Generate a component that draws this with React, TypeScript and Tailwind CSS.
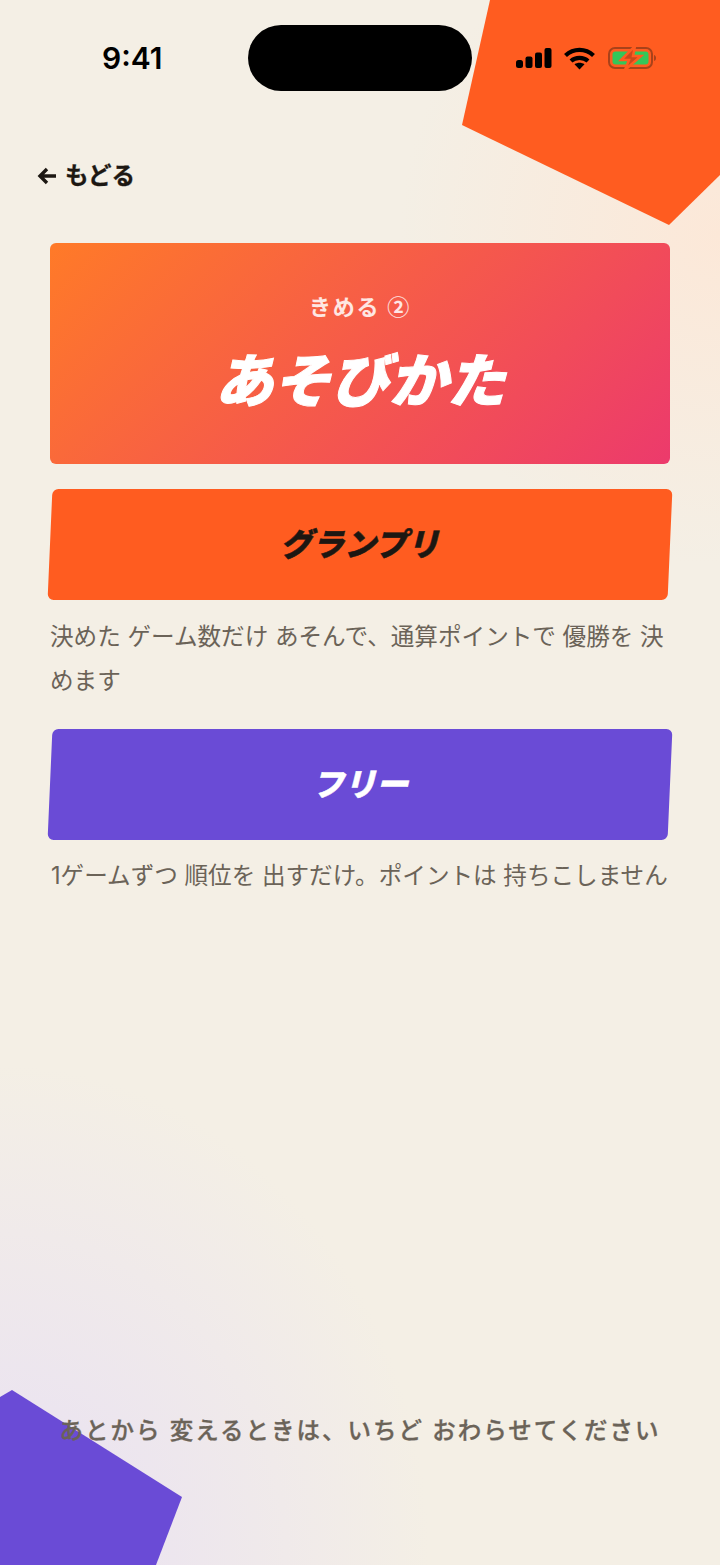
import React from "react";

const jp = "font-['Inter','Noto_Sans_CJK_JP',sans-serif]";

function StatusIcons() {
    return (
        <div className="flex items-center">
            <svg width="36" height="22" viewBox="0 0 36 22" fill="#000">
                <rect x="0" y="13" width="7" height="8" rx="2.5" />
                <rect x="9.5" y="9.5" width="7" height="11.5" rx="2" />
                <rect x="19" y="5.5" width="7" height="15.5" rx="2" />
                <rect x="28.5" y="1" width="7" height="20" rx="2" />
            </svg>
            <svg className="ml-[12px]" width="31" height="23" viewBox="0 0 31 23" fill="none" stroke="#000" strokeWidth="4.2">
                <path d="M1.5 8.5C9.5 1 21.5 1 29.5 8.5" />
                <path d="M7 14C11.5 9.8 19.5 9.8 24 14" />
                <path d="M15.5 22.5L10.5 17.2C13.5 15.2 17.5 15.2 20.5 17.2Z" fill="#000" stroke="none" />
            </svg>
            <svg className="ml-[13px]" width="48" height="24" viewBox="0 0 48 24" fill="none">
                <rect x="1" y="2" width="43" height="20" rx="6" stroke="#a8421a" strokeWidth="2" />
                <rect x="4.5" y="5.5" width="36" height="13" rx="3" fill="#34c759" />
                <path d="M46 9C47.5 9.5 48 10.5 48 12C48 13.5 47.5 14.5 46 15Z" fill="#a8421a" />
                <path d="M27 0L13 14H21L17 24L33 10H25Z" fill="#c8481c" stroke="#ff5c20" strokeWidth="2.5" />
            </svg>
        </div>
    );
}

function ModeButton({ label, color, text }: { label: string; color: string; text: string }) {
    return (
        <button className={`flex h-[111px] w-full skew-x-[-2.5deg] items-center justify-center rounded-[6px] ${color}`}>
            <span className={`skew-x-[2.5deg] text-[32px] font-black italic leading-none [-webkit-text-stroke:0.5px_currentColor] ${text}`}>
                {label}
            </span>
        </button>
    );
}

export default function App() {
    return (
        <div
            className={`relative flex h-[1565px] w-[720px] flex-col overflow-hidden bg-[#f4efe5] bg-[radial-gradient(ellipse_320px_330px_at_100%_15%,#fce8d8_0%,#fce8d800_100%),radial-gradient(ellipse_430px_500px_at_0%_100%,#e8e0f4_0%,#e8e0f400_100%)] ${jp}`}
        >
            {/* corner shapes */}
            <div className="absolute right-0 top-0 h-[225px] w-[258px] bg-[#ff5c20] [clip-path:polygon(28px_0,0_125px,207px_225px,258px_175px,258px_0)]" />
            <div className="absolute bottom-0 left-0 h-[175px] w-[182px] bg-[#6a4bd6] [clip-path:polygon(12px_0,182px_107px,156px_175px,0_175px,0_7px)]" />

            {/* status bar */}
            <div className="relative flex h-[116px] shrink-0 items-center justify-between pl-[102px] pr-[64px]">
                <span className="text-[30px] font-semibold leading-none text-black">9:41</span>
                <div className="absolute left-[248px] top-[25px] h-[66px] w-[224px] rounded-full bg-black" />
                <StatusIcons />
            </div>

            {/* back */}
            <div className="relative flex items-center gap-[8px] pl-[37px] pt-[30px] text-[#1c1712]">
                <svg width="20" height="20" viewBox="0 0 20 20" fill="none" stroke="currentColor" strokeWidth="3.4">
                    <path d="M19 10H3M10 3L3 10L10 17" />
                </svg>
                <span className="text-[23.5px] font-bold leading-[60px] [-webkit-text-stroke:0.3px_currentColor]">もどる</span>
            </div>

            <main className="relative flex flex-col px-[50px] pt-[37px]">
                <div className="flex h-[221px] flex-col items-center rounded-[6px] bg-[linear-gradient(135deg,#ff7a28_0%,#ec3a6c_100%)] pt-[47px] text-white">
                    <p className="font-['Noto_Sans_CJK_JP',sans-serif] text-[22px] font-bold leading-[30px] tracking-[0.08em] text-white/85">
                        きめる ②
                    </p>
                    <h1 className="mt-[21px] text-[58px] font-black italic leading-[80px] [-webkit-text-stroke:1px_white]">あそびかた</h1>
                </div>

                <div className="mt-[25px]">
                    <ModeButton label="グランプリ" color="bg-[#ff5c20]" text="text-[#1c1712]" />
                </div>
                <p className="mt-[15px] text-[23.6px] leading-[44px] text-[#6b6358]">
                    決めた ゲーム数だけ あそんで、通算ポイントで 優勝を 決めます
                </p>

                <div className="mt-[26px]">
                    <ModeButton label="フリー" color="bg-[#6a4bd6]" text="text-white" />
                </div>
                <p className="mt-[14px] whitespace-nowrap pl-px text-[23.6px] leading-[44px] text-[#6b6358]">
                    1ゲームずつ 順位を 出すだけ。ポイントは 持ちこしません
                </p>
            </main>

            <p className="relative mt-auto pb-[116px] text-center text-[23.5px] font-medium leading-[36px] tracking-[0.085em] text-[#6b6358] [-webkit-text-stroke:0.3px_currentColor]">
                あとから 変えるときは、いちど おわらせてください
            </p>
        </div>
    );
}
